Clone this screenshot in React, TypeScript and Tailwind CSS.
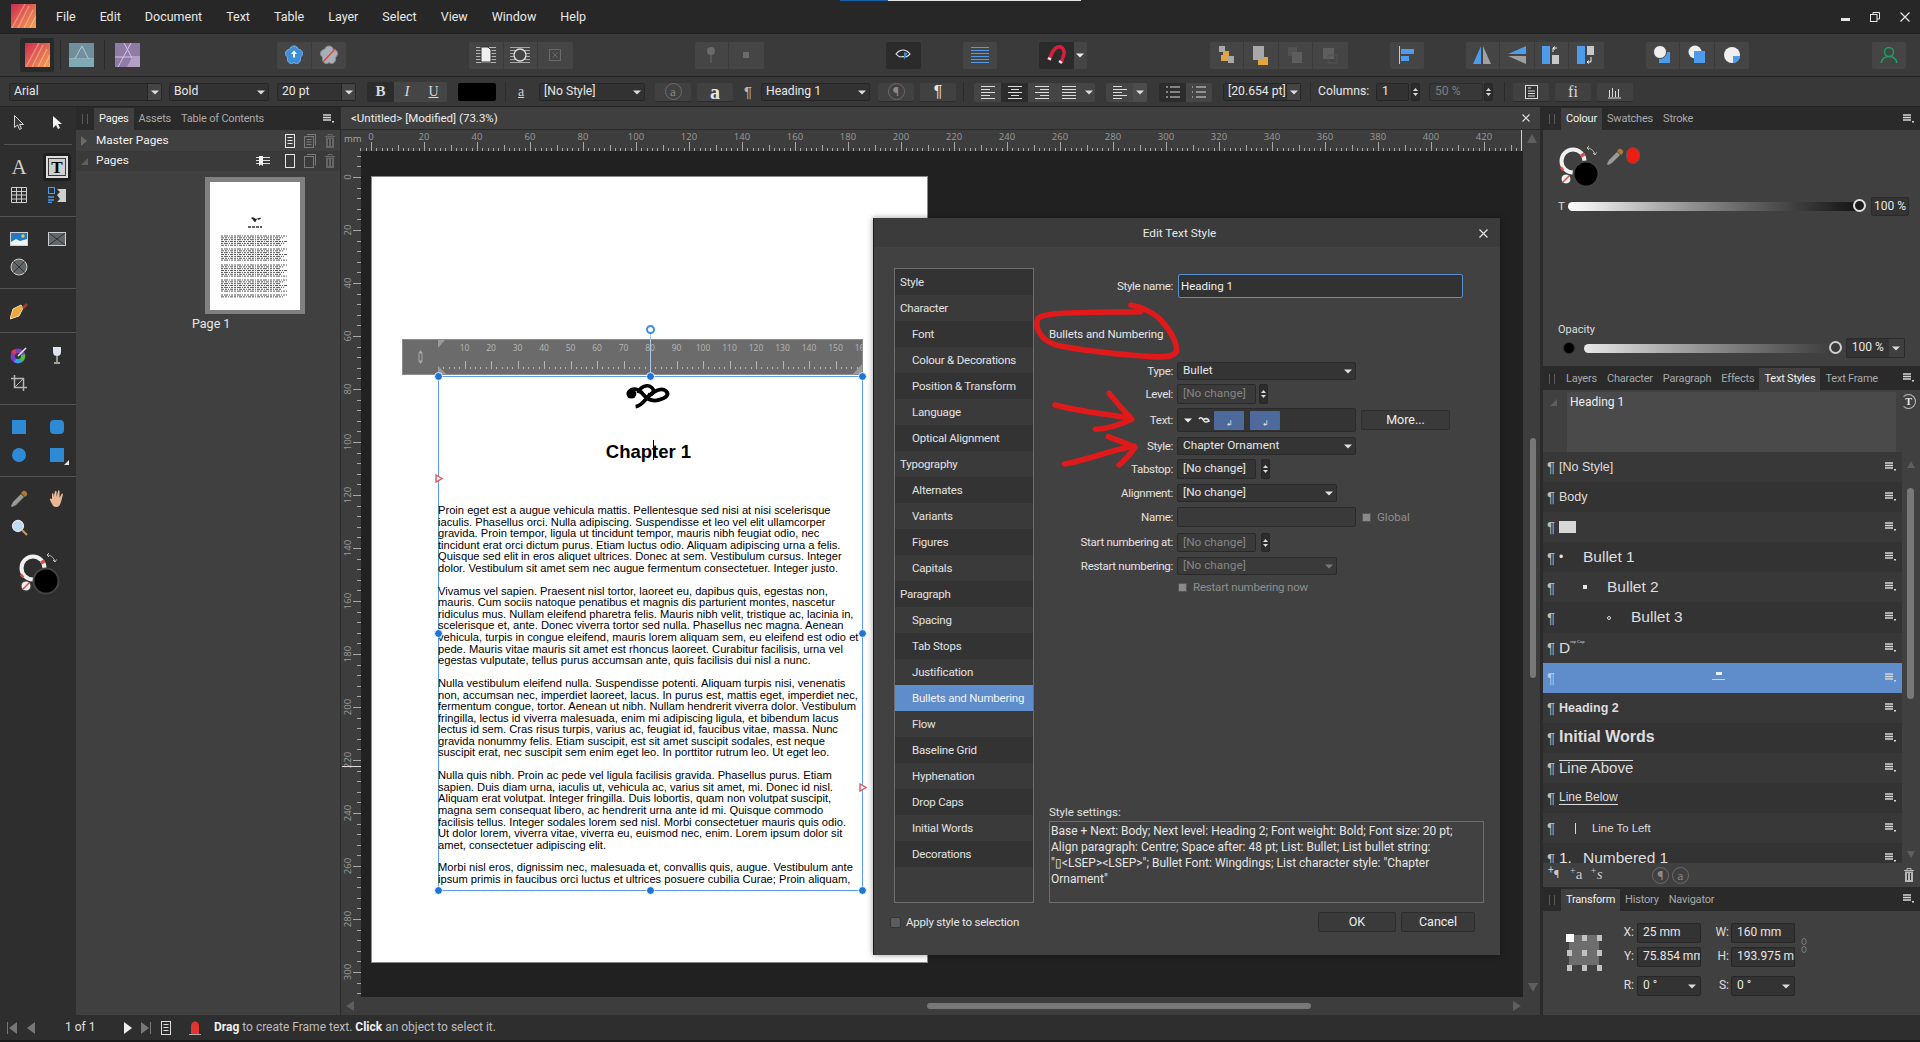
import type { ReactNode } from "react";

const dim = "#6a6a6a";

function Svg({ w = 24, h = 24, vb, children, className }: { w?: number; h?: number; vb?: string; children: ReactNode; className?: string }) {
  return (
    <svg width={w} height={h} viewBox={vb ?? `0 0 ${w} ${h}`} className={className} fill="none">
      {children}
    </svg>
  );
}

function Caret({ color = "#dcdcdc" }: { color?: string }) {
  return (
    <Svg w={8} h={5}>
      <path d="M0 0.500h8L4 4.500z" fill={color} />
    </Svg>
  );
}

function Persona({ from, to, id, line }: { from: string; to: string; id: string; line: string }) {
  return (
    <Svg w={25} h={24}>
      <defs>
        <linearGradient id={id} x1="0" y1="0" x2="1" y2="1">
          <stop offset="0" stopColor={from} />
          <stop offset="1" stopColor={to} />
        </linearGradient>
      </defs>
      <rect width="25" height="24" fill={`url(#${id})`} />
      <path d="M1 24L14 0M7 24L18 2M13 24L22 6M19 24L25 12" stroke={line} strokeWidth="1.400" />
    </Svg>
  );
}

function MenuIcon() {
  return (
    <Svg w={11} h={9}>
      <path d="M0 1h8M0 3.500h8M0 6h8" stroke="#d5d5d5" strokeWidth="1.300" />
      <rect x="9" y="7" width="2" height="1.500" fill="#d5d5d5" />
    </Svg>
  );
}

function Flower({ off }: { off?: boolean }) {
  return (
    <Svg w={20} h={20}>
      <path
        d="M10 1c2.400 0 3.700 1.600 4.200 3.200 2.200.2 4.300 1.700 4.300 4.300 0 1.800-1 3-2 3.800.4 2.200-.3 6.200-3.900 6.200-1.100 0-1.900-.4-2.600-1-.7.6-1.500 1-2.600 1-3.600 0-4.300-4-3.900-6.200-1-.8-2-2-2-3.800 0-2.600 2.100-4.100 4.300-4.300C6.300 2.600 7.600 1 10 1z"
        fill={off ? "#a9afb8" : "#3f8ed6"}
        stroke={off ? "#8b8f96" : "#7bb6ea"}
      />
      {off ? <path d="M4 17L16 4" stroke="#e2462f" strokeWidth="1.300" /> : <path d="M10 5.500l3 3.500h-2v3.500H9V9H7z" fill="#fff" />}
    </Svg>
  );
}

function Btn({ children, className = "" }: { children?: ReactNode; className?: string }) {
  return <div className={`w-[34.500px] h-[27px] flex items-center justify-center bg-[#454545] border-r border-[#3a3a3a] last:border-r-0 ${className}`}>{children}</div>;
}

function Group({ children, className = "" }: { children: ReactNode; className?: string }) {
  return <div className={`flex shrink-0 rounded-[2px] overflow-hidden ${className}`}>{children}</div>;
}

function OrderIcon({ n }: { n: number }) {
  if (n === 0)
    return (
      <Svg w={17} h={20}>
        <rect x="1" y="1" width="6" height="6" fill="#a8a8a8" />
        <rect x="5" y="6" width="6" height="6" fill="#e2a53d" />
        <rect x="10" y="11" width="6" height="7" fill="#a8a8a8" />
        <rect x="3" y="10" width="7" height="6" fill="#e2a53d" />
      </Svg>
    );
  return (
    <Svg w={17} h={20}>
      <rect x="6" y="12" width="10" height="8" fill="#e2a53d" />
      <rect x="1" y="1" width="11" height="14" fill="#a8a8a8" />
    </Svg>
  );
}

function TitleBar() {
  const items = ["File", "Edit", "Document", "Text", "Table", "Layer", "Select", "View", "Window", "Help"];
  return (
    <div className="h-[33px] shrink-0 flex items-center bg-[#272727] relative">
      <div className="ml-[11px] mt-[-2px]">
        <Persona id="pubA" from="#cf2a52" to="#f7a24b" line="#ffffff55" />
      </div>
      <div className="flex ml-[20px] mt-[2px] gap-[24px] text-[#e8e8e8] text-[12.500px]">
        {items.map((t) => (
          <span key={t}>{t}</span>
        ))}
      </div>
      <div className="ml-auto flex items-center gap-[20px] mr-[10px]">
        <div className="w-[9px] h-[3px] bg-[#e6e6e6] mt-[6px]" />
        <Svg w={10} h={10}>
          <rect x="0.500" y="2.500" width="6.500" height="7" stroke="#e6e6e6" />
          <path d="M3 2.500V0.500h6.500V7H7" stroke="#e6e6e6" />
        </Svg>
        <Svg w={10} h={10}>
          <path d="M0.500 0.500l9 9M9.500 0.500l-9 9" stroke="#e6e6e6" strokeWidth="1.200" />
        </Svg>
      </div>
      <div className="absolute left-[840px] top-0 h-px w-[48px] bg-[#1b5fa8]" />
      <div className="absolute left-[888px] top-0 h-px w-[193px] bg-[#e6e6e6]" />
    </div>
  );
}

function MainToolbar() {
  return (
    <div className="h-[44px] shrink-0 flex items-center bg-[#3a3a3a] border-t border-b border-[#222222]">
      <div className="ml-[20px] w-[34px] h-[34px] flex items-center justify-center bg-[#292929] rounded-[2px] shrink-0">
        <Persona id="pubB" from="#cf2a52" to="#f7a24b" line="#ffffff55" />
      </div>
      <div className="ml-[6px] w-px h-[30px] bg-[#2a2a2a] shrink-0" />
      <div className="ml-[8px] shrink-0">
        <Svg w={25} h={24}>
          <rect width="25" height="24" fill="#6f8f9f" />
          <path d="M3 21L13 3l9 18M0 16h25" stroke="#b5ccd6" strokeWidth="1" />
          <path d="M0 16h25v8H0z" fill="#7faab4" />
        </Svg>
      </div>
      <div className="ml-[10px] w-px h-[30px] bg-[#2a2a2a] shrink-0" />
      <div className="ml-[10px] shrink-0">
        <Svg w={25} h={24}>
          <rect width="25" height="24" fill="#8f7ba4" />
          <path d="M0 14h25M16 0L3 24M9 0l13 24" stroke="#d5c6e2" strokeWidth="1" />
          <path d="M12 24l5-10h8v10z" fill="#b3a0c4" />
        </Svg>
      </div>

      <Group className="ml-[137px]">
        <Btn><Flower /></Btn>
        <Btn><Flower off /></Btn>
      </Group>

      <Group className="ml-[123px]">
        <Btn>
          <Svg w={20} h={20}>
            <path d="M0 2.500h20M0 5.500h20M0 8.500h20M0 11.500h20M0 14.500h20M0 17.500h20" stroke="#b5b5b5" />
            <path d="M5 2h7l3 3v12H5z" fill="#eeeeee" stroke="#333" />
          </Svg>
        </Btn>
        <Btn>
          <Svg w={20} h={20}>
            <path d="M0 2.500h20M0 5.500h20M0 8.500h20M0 11.500h20M0 14.500h20M0 17.500h20" stroke="#a5a5a5" />
            <circle cx="10" cy="10" r="6" fill="#454545" stroke="#e0e0e0" strokeWidth="1.300" />
          </Svg>
        </Btn>
        <Btn>
          <Svg w={12} h={12}>
            <rect x="0.500" y="0.500" width="11" height="11" stroke={dim} />
            <path d="M3.500 3.500l5 5M8.500 3.500l-5 5" stroke={dim} />
          </Svg>
        </Btn>
      </Group>

      <Group className="ml-[122px]">
        <Btn>
          <Svg w={10} h={18}>
            <circle cx="5" cy="5" r="4" fill={dim} />
            <path d="M5 8v9" stroke={dim} />
          </Svg>
        </Btn>
        <Btn><div className="w-[6px] h-[6px] bg-[#6a6a6a]" /></Btn>
      </Group>

      <div className="ml-[122px] w-[35px] h-[27px] flex items-center justify-center bg-[#2b2b2b] rounded-[2px] shrink-0">
        <Svg w={16} h={12}>
          <path d="M1 5c2-2.500 4.500-4 7-4s5 1.500 7 4c-1 1-2.500 2.200-4 3l-3-.500-3 .500C3.500 7.500 2.200 6.300 1 5z" stroke="#e8e8e8" strokeWidth="1.100" />
          <path d="M9 3l3.500 1.500-2.500 4-1 3z" fill="#3f8ed6" />
        </Svg>
      </div>

      <div className="ml-[42px] w-[34px] h-[27px] flex items-center justify-center bg-[#454545] rounded-[2px] shrink-0">
        <Svg w={18} h={16}>
          <path d="M0 0.500h18M0 3.500h18M0 6.500h18M0 9.500h18M0 12.500h18M0 15.500h18" stroke="#4d9bea" strokeWidth="1.200" />
        </Svg>
      </div>

      <div className="ml-[42px] flex shrink-0 rounded-[2px] overflow-hidden">
        <div className="w-[35px] h-[27px] flex items-center justify-center bg-[#2b2b2b]">
          <Svg w={19} h={20}>
            <path d="M14 18l3-9C18 4 14 1 11 2 7 3 6 6 5 8l-3 7" stroke="#d51f3c" strokeWidth="3.600" />
            <path d="M1 13l3 1.500M12 16l3 2" stroke="#e8e8e8" strokeWidth="2.400" />
          </Svg>
        </div>
        <div className="w-[13px] h-[27px] flex items-center justify-center bg-[#454545]"><Caret color="#efefef" /></div>
      </div>

      <Group className="ml-[123px]">
        <Btn><OrderIcon n={0} /></Btn>
        <Btn><OrderIcon n={1} /></Btn>
        <Btn>
          <Svg w={16} h={18}>
            <rect x="1" y="1" width="9" height="9" fill="#525252" />
            <rect x="5" y="6" width="10" height="11" fill="#5e5e5e" />
          </Svg>
        </Btn>
        <Btn>
          <Svg w={16} h={18}>
            <rect x="1" y="2" width="11" height="11" fill="#5e5e5e" />
            <rect x="6" y="9" width="9" height="8" stroke="#525252" />
          </Svg>
        </Btn>
      </Group>

      <Btnless className="ml-[42px]">
        <Svg w={15} h={18}>
          <path d="M0.500 0v18" stroke="#c8c8c8" />
          <rect x="2" y="3" width="13" height="5" fill="#4d9bea" />
          <rect x="2" y="10" width="8" height="5" fill="#4d9bea" />
        </Svg>
      </Btnless>

      <Group className="ml-[42px]">
        <Btn>
          <Svg w={20} h={20}>
            <path d="M9 1v18H1z" fill="#4d9bea" />
            <path d="M11 1v18h8z" fill="#a0a0a0" />
          </Svg>
        </Btn>
        <Btn>
          <Svg w={20} h={20}>
            <path d="M19 1v8H1z" fill="#4d9bea" />
            <path d="M19 19v-8H1z" fill="#a0a0a0" />
          </Svg>
        </Btn>
        <Btn>
          <Svg w={18} h={20}>
            <rect x="0" y="1" width="8" height="18" fill="#4d9bea" />
            <rect x="10" y="10" width="7" height="9" fill="#c8c8c8" />
            <path d="M11 7V3h4M11 3l2-1.500M11 3l2 1.500" stroke="#efefef" />
          </Svg>
        </Btn>
        <Btn>
          <Svg w={18} h={20}>
            <rect x="0" y="1" width="8" height="18" fill="#4d9bea" />
            <rect x="10" y="1" width="7" height="9" fill="#c8c8c8" />
            <path d="M14 12v5h-4M10 17l2-1.500M10 17l2 1.500" stroke="#efefef" />
          </Svg>
        </Btn>
      </Group>

      <Group className="ml-[42px]">
        <Btn>
          <Svg w={18} h={20}>
            <rect x="6" y="7" width="11" height="11" fill="#4d9bea" />
            <circle cx="7" cy="7" r="6.500" fill="#efefef" stroke="#454545" />
          </Svg>
        </Btn>
        <Btn>
          <Svg w={18} h={20}>
            <circle cx="7" cy="7" r="6.500" fill="#efefef" />
            <rect x="6" y="6" width="11" height="12" fill="#4d9bea" />
          </Svg>
        </Btn>
        <Btn>
          <Svg w={18} h={20}>
            <circle cx="9" cy="10" r="8" fill="#efefef" />
            <path d="M10 11h7c0 4-3 7-7 7z" fill="#4d9bea" />
          </Svg>
        </Btn>
      </Group>

      <Btnless className="ml-[123px]">
        <Svg w={18} h={18}>
          <circle cx="9" cy="6" r="4.500" stroke="#17a365" strokeWidth="1.500" />
          <path d="M1 17c1-4 4-6.500 8-6.500s7 2.500 8 6.500" stroke="#17a365" strokeWidth="1.500" />
        </Svg>
      </Btnless>
    </div>
  );
}

function Btnless({ children, className = "" }: { children: ReactNode; className?: string }) {
  return <div className={`w-[34px] h-[27px] flex items-center justify-center bg-[#454545] rounded-[2px] shrink-0 ${className}`}>{children}</div>;
}

function Combo({ label, className = "", split, muted }: { label: string; className?: string; split?: boolean; muted?: boolean }) {
  return (
    <div className={`h-[18px] shrink-0 flex items-center bg-[#323232] border border-[#262626] rounded-[2px] pl-[4px] ${muted ? "text-[#8a8a8a]" : "text-[#e6e6e6]"} ${className}`}>
      <span className="flex-1 whitespace-nowrap overflow-hidden">{label}</span>
      {split ? (
        <span className="w-[14px] h-full flex items-center justify-center bg-[#444444] border-l border-[#262626]">
          <Caret />
        </span>
      ) : (
        <span className="w-[14px] flex items-center justify-center">
          <Caret color={muted ? "#777777" : "#dcdcdc"} />
        </span>
      )}
    </div>
  );
}

function Spin({ className = "" }: { className?: string }) {
  return (
    <div className={`w-[9px] h-[18px] shrink-0 flex flex-col items-center justify-center gap-[2px] bg-[#2c2c2c] rounded-[2px] border border-[#262626] ${className}`}>
      <svg width="5" height="3"><path d="M0 3h5L2.500 0z" fill="#dcdcdc" /></svg>
      <svg width="5" height="3"><path d="M0 0h5L2.500 3z" fill="#dcdcdc" /></svg>
    </div>
  );
}

function CtxBtn({ children, className = "" }: { children?: ReactNode; className?: string }) {
  return <div className={`w-[36px] h-[19px] shrink-0 flex items-center justify-center bg-[#414141] border-b border-[#2c2c2c] rounded-[2px] ${className}`}>{children}</div>;
}

function Lines({ d, color = "#dcdcdc" }: { d: string; color?: string }) {
  return (
    <Svg w={14} h={14}>
      <path d={d} stroke={color} />
    </Svg>
  );
}

function Serif({ children, className = "" }: { children: ReactNode; className?: string }) {
  return <span className={`font-['Liberation_Serif',serif] ${className}`}>{children}</span>;
}

function CtxSep({ className = "" }: { className?: string }) {
  return <div className={`w-px h-[20px] bg-[#2a2a2a] shrink-0 ${className}`} />;
}

function Circled({ children }: { children: ReactNode }) {
  return (
    <span className="w-[17px] h-[17px] rounded-full border border-[#6c6c6c] flex items-center justify-center text-[#8a8a8a] text-[13px] leading-none">
      {children}
    </span>
  );
}

function ContextBar() {
  return (
    <div className="h-[30px] shrink-0 flex items-center bg-[#383838] border-b border-[#222222] text-[12.200px] pt-[1px]">
      <Combo label="Arial" split className="ml-[9px] w-[153px]" />
      <Combo label="Bold" className="ml-[7px] w-[100px]" />
      <Combo label="20 pt" split className="ml-[8px] w-[79px]" />
      <div className="ml-[11px] flex shrink-0 rounded-[2px] overflow-hidden h-[20px]">
        <div className="w-[27px] flex items-center justify-center bg-[#2c2c2c]"><Serif className="font-bold text-[15px] text-[#d8d8d8]">B</Serif></div>
        <div className="w-[26px] flex items-center justify-center bg-[#454545]"><Serif className="italic text-[15px] text-[#d8d8d8]">I</Serif></div>
        <div className="w-[27px] flex items-center justify-center bg-[#454545]"><Serif className="underline text-[14px] text-[#d8d8d8]">U</Serif></div>
      </div>
      <div className="ml-[11px] w-[38px] h-[18px] bg-black rounded-[2px] shrink-0" />
      <CtxSep className="ml-[9px]" />
      <Serif className="ml-[12px] w-[14px] text-[14px] text-[#d0d0d0] underline">a</Serif>
      <Combo label="[No Style]" className="ml-[7px] w-[106px]" />
      <CtxBtn className="ml-[10px] bg-[#3d3d3d]"><Circled><Serif>a</Serif></Circled></CtxBtn>
      <CtxBtn className="ml-[6px]"><Serif className="text-[20px] leading-none text-[#e6e6e6] font-bold">a</Serif></CtxBtn>
      <span className="ml-[11px] w-[12px] text-[15px] text-[#b8b8b8] font-['Liberation_Sans',sans-serif]">¶</span>
      <Combo label="Heading 1" className="ml-[5px] w-[109px]" />
      <CtxBtn className="ml-[8px] bg-[#3d3d3d]"><Circled>¶</Circled></CtxBtn>
      <CtxBtn className="ml-[6px]"><span className="text-[16px] leading-none text-[#e6e6e6] font-['Liberation_Sans',sans-serif]">¶</span></CtxBtn>
      <CtxSep className="ml-[7px]" />
      <div className="ml-[10px] flex shrink-0 rounded-[2px] overflow-hidden h-[19px]">
        <div className="w-[27px] flex items-center justify-center bg-[#454545]"><Lines d="M0 1.500h14M0 4.500h9M0 7.500h14M0 10.500h9M0 13.500h14" /></div>
        <div className="w-[27px] flex items-center justify-center bg-[#2c2c2c]"><Lines d="M0 1.500h14M3 4.500h8M0 7.500h14M3 10.500h8M0 13.500h14" /></div>
        <div className="w-[27px] flex items-center justify-center bg-[#454545]"><Lines d="M0 1.500h14M5 4.500h9M0 7.500h14M5 10.500h9M0 13.500h14" /></div>
        <div className="w-[27px] flex items-center justify-center bg-[#454545]"><Lines d="M0 1.500h14M0 4.500h14M0 7.500h14M0 10.500h14M0 13.500h14" /></div>
        <div className="w-[13px] flex items-center justify-center bg-[#454545]"><Caret /></div>
      </div>
      <div className="ml-[11px] flex shrink-0 rounded-[2px] overflow-hidden h-[19px]">
        <div className="w-[27px] flex items-center justify-center bg-[#454545]"><Lines d="M0 1.500h9M0 4.500h14M0 7.500h9M0 10.500h14M0 13.500h9" /></div>
        <div className="w-[14px] flex items-center justify-center bg-[#4c4c4c]"><Caret /></div>
      </div>
      <div className="ml-[12px] flex shrink-0 rounded-[2px] overflow-hidden h-[19px]">
        <div className="w-[27px] flex items-center justify-center bg-[#2c2c2c]"><Lines d="M0 2h2M4 2h10M0 7h2M4 7h10M0 12h2M4 12h10" /></div>
        <div className="w-[26px] flex items-center justify-center bg-[#454545]"><Lines d="M0 1v2M0 6v2M0 11v2M4 2h10M4 7h10M4 12h10" /></div>
      </div>
      <Combo label="[20.654 pt]" split className="ml-[11px] w-[78px]" />
      <CtxSep className="ml-[9px]" />
      <span className="ml-[7px] w-[52px] shrink-0 text-[#e6e6e6] whitespace-nowrap">Columns:</span>
      <div className="ml-[6px] w-[33px] h-[18px] bg-[#323232] border border-[#262626] rounded-[2px] pl-[5px] flex items-center shrink-0">1</div>
      <Spin className="ml-[2px]" />
      <div className="ml-[9px] w-[54px] h-[18px] bg-[#383838] border border-[#2c2c2c] rounded-[2px] pl-[5px] flex items-center text-[#7c7c7c] shrink-0">50 %</div>
      <Spin className="ml-[1px]" />
      <CtxSep className="ml-[11px]" />
      <CtxBtn className="ml-[8px]">
        <Svg w={13} h={14}>
          <rect x="0.500" y="0.500" width="12" height="13" stroke="#dcdcdc" fill="#333" />
          <path d="M3 3h3M3 6h7M3 8.500h7M3 11h7" stroke="#dcdcdc" />
        </Svg>
      </CtxBtn>
      <CtxBtn className="ml-[6px]"><Serif className="text-[16px] leading-none text-[#d8d8d8]">fi</Serif></CtxBtn>
      <CtxBtn className="ml-[6px] bg-[#2c2c2c]">
        <Lines d="M1.500 5v7M4.500 3v9M7.500 6v6M10.500 4v8M0 13h13" />
      </CtxBtn>
    </div>
  );
}

function ToolSection({ children }: { children: ReactNode }) {
  return <div className="grid grid-cols-2 auto-rows-[28px] border-b border-[#555555] pt-[8px] pb-[7px]">{children}</div>;
}

function Tool({ children, active }: { children?: ReactNode; active?: boolean }) {
  return <div className={`flex items-center justify-center ${active ? "bg-[#1f1f1f] rounded-[4px] mx-[5px]" : ""}`}>{children}</div>;
}

function Ring({ size = 42 }: { size?: number }) {
  return (
    <Svg w={size} h={size} vb="0 0 42 42">
      <circle cx="15" cy="15" r="11.500" stroke="#f0f0f0" strokeWidth="4" />
      <path d="M24 7.500l1.500 3M5 22l-2 1.500" stroke="#e24a44" strokeWidth="4" />
      <circle cx="28" cy="28" r="12.500" fill="#000" stroke="#444" strokeWidth="2" />
      <circle cx="8" cy="33" r="5" fill="#f0f0f0" stroke="#3a3a3a" />
      <path d="M4.500 36.500l7-7" stroke="#e24a44" strokeWidth="1.500" />
      <path d="M29 2c3 0 7 2 8 7M29 2l2-2M29 2l2 2M37 9l-2-2M37 9l1.500-2.500" stroke="#bdbdbd" />
    </Svg>
  );
}

function Dropper({ size = 18 }: { size?: number }) {
  return (
    <Svg w={size} h={size} vb="0 0 18 18">
      <path d="M11 4l3 3-8 8-4 2-1-1 2-4z" fill="#9a9a9a" />
      <path d="M11 3l4 4 2-2c1-2-2-5-4-4z" fill="#b07a2e" />
    </Svg>
  );
}

function BlueSquare({ cls }: { cls: string }) {
  return <div className={`w-[14px] h-[14px] bg-[#2f8ad6] ${cls}`} />;
}

function ToolsColumn() {
  return (
    <div className="w-[76px] shrink-0 bg-[#2e2e2e] flex flex-col px-[4px] pt-[1px]">
      <div className="grid grid-cols-2 auto-rows-[28px] -mx-[4px]">
        <Tool>
          <Svg w={11} h={15}>
            <path d="M0.500 0.500v12l3-2.500 2 4.500 2-1-2-4h4z" stroke="#d5d5d5" fill="#3a3a3a" />
          </Svg>
        </Tool>
        <Tool>
          <Svg w={9} h={13}>
            <path d="M0 0v12l3-3 2 4 2-1-2-4h4z" fill="#f5f5f5" />
          </Svg>
        </Tool>
      </div>
      <div className="border-b border-[#555555] h-[9px]" />
      <div className="-mx-[4px]">
        <ToolSection>
          <Tool><Serif className="text-[21px] leading-none text-[#cfcfcf]">A</Serif></Tool>
          <Tool active>
            <div className="w-[22px] h-[22px] bg-[#3a3a3a] border-[2px] border-[#dcdcdc] flex items-center justify-center">
              <div className="w-[16px] h-[16px] bg-[#cfcfcf] flex items-center justify-center">
                <Serif className="text-[17px] leading-none text-black font-bold">T</Serif>
              </div>
            </div>
          </Tool>
          <Tool>
            <Svg w={16} h={16}>
              <path d="M0.500 0.500h15v15H0.500zM0.500 4.500h15M0.500 8h15M0.500 12h15M5.500 0.500v15M10.500 0.500v15" stroke="#cfcfcf" />
            </Svg>
          </Tool>
          <Tool>
            <Svg w={19} h={16}>
              <rect x="0.500" y="0.500" width="6" height="6" stroke="#4d9bea" />
              <path d="M0 10h6M0 13h6M0 15.500h4" stroke="#4d9bea" strokeWidth="1.300" />
              <path d="M9 2h9v13H9l3-3-3-4 3-3z" fill="#cfcfcf" />
            </Svg>
          </Tool>
        </ToolSection>
        <ToolSection>
          <Tool>
            <Svg w={18} h={14}>
              <rect x="0.500" y="0.500" width="17" height="13" fill="#1f78c8" stroke="#d0d0d0" />
              <path d="M1 10l5-3 4 2 7-2v6H1z" fill="#f3f3f3" />
              <circle cx="13" cy="4" r="1.700" fill="#f1c453" />
            </Svg>
          </Tool>
          <Tool>
            <Svg w={18} h={14}>
              <rect x="0.500" y="0.500" width="17" height="13" fill="#666" stroke="#cfcfcf" />
              <path d="M1 1l16 12M17 1L1 13" stroke="#24304a" />
            </Svg>
          </Tool>
          <Tool>
            <Svg w={18} h={18}>
              <circle cx="9" cy="9" r="8" fill="#666" stroke="#cfcfcf" />
              <path d="M3.500 3.500l11 11M14.500 3.500l-11 11" stroke="#24304a" />
            </Svg>
          </Tool>
          <Tool />
        </ToolSection>
        <ToolSection>
          <Tool>
            <Svg w={18} h={18}>
              <path d="M11 3L3 7 0 17l9-3 4-8z" fill="#e9a93e" stroke="#f7dba6" />
              <path d="M12 5l4-4 2 2-4 4z" fill="#a33a2e" />
            </Svg>
          </Tool>
          <Tool />
        </ToolSection>
        <ToolSection>
          <Tool>
            <Svg w={18} h={18}>
              <circle cx="8" cy="10" r="7.500" fill="#7a3fc2" />
              <path d="M8 10L1 6a8 8 0 0 1 4-3z" fill="#e33a4e" />
              <path d="M8 10l7-2a8 8 0 0 1-3 8z" fill="#55c13e" />
              <path d="M8 10l4 6a8 8 0 0 1-8 0z" fill="#2ba7e0" />
              <circle cx="8" cy="10" r="3" fill="#333" />
              <path d="M8 10l8-8" stroke="#f0f0f0" strokeWidth="1.400" />
            </Svg>
          </Tool>
          <Tool>
            <Svg w={10} h={17}>
              <path d="M1 0h8v5c0 3-2 4-4 4S1 8 1 5z" fill="#dfe5ef" />
              <path d="M5 9v6M2 16h6" stroke="#c9c9c9" strokeWidth="1.300" />
            </Svg>
          </Tool>
          <Tool>
            <Svg w={16} h={16}>
              <path d="M3.500 0v12.500H16M0 3.500h12.500V16" stroke="#b5b5b5" strokeWidth="1.500" />
              <path d="M3 13L13 3" stroke="#b5b5b5" />
            </Svg>
          </Tool>
          <Tool />
        </ToolSection>
        <ToolSection>
          <Tool><BlueSquare cls="" /></Tool>
          <Tool><BlueSquare cls="rounded-[4px]" /></Tool>
          <Tool><BlueSquare cls="rounded-full" /></Tool>
          <Tool>
            <div className="relative">
              <BlueSquare cls="" />
              <div className="absolute left-[14px] top-[12px] w-0 h-0 border-l-[5px] border-l-transparent border-b-[5px] border-b-[#e6e6e6]" />
            </div>
          </Tool>
        </ToolSection>
        <div className="grid grid-cols-2 auto-rows-[28px] py-[8px]">
          <Tool><Dropper /></Tool>
          <Tool>
            <Svg w={17} h={18}>
              <path d="M3 9V4c0-1 1.500-1 1.500 0v3L6 1.500c0-1 1.500-1 1.500 0V7L9 1c.3-1 1.800-.8 1.500.3V8l2-4c.5-1 1.800-.5 1.400.6L12 12c-1 3-2 5-5 5-2 0-3-1-4-3L1 10c-.5-1 .8-2 1.500-1z" fill="#e8b894" />
            </Svg>
          </Tool>
          <Tool>
            <Svg w={17} h={17}>
              <circle cx="7" cy="7" r="5.500" fill="#bcdcf5" stroke="#dfe6ee" strokeWidth="1.300" />
              <path d="M11 11l5 5" stroke="#d59b4d" strokeWidth="2" />
            </Svg>
          </Tool>
          <Tool />
        </div>
        <div className="ml-[18px] mt-[4px]">
          <Ring size={42} />
        </div>
      </div>
    </div>
  );
}

function Tabs({ items, active, h = "h-[23px]" }: { items: string[]; active: string; h?: string }) {
  return (
    <div className={`${h} shrink-0 flex items-end bg-[#2a2a2a] relative text-[11px] tracking-[-0.2px]`}>
      <div className="w-[6px] h-[10px] ml-[6px] mr-[6px] mb-[6px] border-x border-[#5a5a5a]" />
      {items.map((t) => (
        <div key={t} className={`h-[22px] px-[5px] flex items-center whitespace-nowrap ${t === active ? "bg-[#404040] text-[#f0f0f0]" : "text-[#a9a9a9]"}`}>
          {t}
        </div>
      ))}
      <div className="absolute right-[6px] top-[7px]"><MenuIcon /></div>
    </div>
  );
}

function Thumb() {
  const paras: [number, number][] = [[54, 6], [67, 7], [83, 7], [98, 7], [113, 2]];
  return (
    <Svg w={90} h={128}>
      <rect width="90" height="128" fill="#fff" />
      <path d="M41 36c2-2 4 1 5 1s3-2 5-1c-1 2-3 2-4 1-1 1-1 3-2 3s-2-3-4-4z" fill="#222" />
      <path d="M38 45h14" stroke="#333" strokeWidth="1.400" strokeDasharray="3 1" />
      {paras.map(([y, n]) =>
        Array.from({ length: n }).map((_, i) => (
          <path key={`${y}-${i}`} d={`M11 ${y + i * 1.850}h${66 - (i % 3) * 3}`} stroke="#555" strokeWidth="1" strokeDasharray={i % 2 ? "3 1 2 1 1 1" : "2 1 4 1 1 1 2 1"} />
        )),
      )}
    </Svg>
  );
}

function DocLines({ color = "#cfcfcf", copy }: { color?: string; copy?: boolean }) {
  return (
    <Svg w={12} h={14}>
      {copy ? (
        <>
          <path d="M3 0.500h8.500v11" stroke={color} />
          <rect x="0.500" y="2.500" width="9" height="11" stroke={color} />
          <path d="M2.500 5.500h5M2.500 8h5M2.500 10.500h5" stroke={color} />
        </>
      ) : (
        <>
          <rect x="1.500" y="0.500" width="9" height="13" stroke={color} />
          <path d="M3.500 3.500h5M3.500 6.500h5M3.500 9.500h5" stroke={color} />
        </>
      )}
    </Svg>
  );
}

function Trash({ color = "#666666" }: { color?: string }) {
  return (
    <Svg w={10} h={14}>
      <path d="M0 2.500h10M3 2V0.500h4V2" stroke={color} />
      <path d="M1 3.500h8V14H1z" fill={color} />
      <path d="M3.500 5v7M6.500 5v7" stroke="#3a3a3a" />
    </Svg>
  );
}

function PagesPanel() {
  return (
    <div className="w-[265px] shrink-0 flex flex-col bg-[#404040] border-r border-[#2a2a2a]">
      <Tabs items={["Pages", "Assets", "Table of Contents"]} active="Pages" />
      <div className="h-[21px] flex items-center">
        <div className="ml-[5px] w-[15px]"><div className="w-0 h-0 border-y-[5px] border-y-transparent border-l-[6px] border-l-[#6a6a6a]" /></div>
        <span className="w-[188px] text-[#f0f0f0] text-[11.800px] whitespace-nowrap">Master Pages</span>
        <DocLines color="#e6e6e6" />
        <div className="ml-[8px]"><DocLines color="#7a7a7a" copy /></div>
        <div className="ml-[9px]"><Trash /></div>
      </div>
      <div className="h-[20px] flex items-center bg-[#3a3a3a]">
        <div className="ml-[5px] w-[15px]"><div className="w-0 h-0 border-t-[7px] border-t-transparent border-r-[7px] border-r-[#5e5e5e]" /></div>
        <span className="w-[160px] text-[#f0f0f0] text-[11.800px]">Pages</span>
        <Svg w={14} h={10}>
          <path d="M0 1.500h14M0 4.500h14M0 7.500h14" stroke="#dcdcdc" />
          <path d="M3 0h4v10l-2-1.500L3 10z" fill="#f0f0f0" />
        </Svg>
        <div className="ml-[14px]">
          <Svg w={12} h={14}><rect x="1.500" y="0.500" width="9" height="13" stroke="#e6e6e6" /></Svg>
        </div>
        <div className="ml-[8px]">
          <Svg w={12} h={14}>
            <path d="M3 0.500h8.500v11" stroke="#7a7a7a" />
            <rect x="0.500" y="2.500" width="9" height="11" stroke="#7a7a7a" />
          </Svg>
        </div>
        <div className="ml-[9px]"><Trash /></div>
      </div>
      <div className="ml-[129px] mt-[6px] w-[100px] h-[137px] bg-[#808080] flex items-center justify-center">
        <Thumb />
      </div>
      <div className="ml-[116px] mt-[2px] text-[12.500px] text-[#e8e8e8]">Page 1</div>
    </div>
  );
}

function HRuler() {
  const ticks: number[] = [];
  for (let mm = -4; mm <= 432; mm += 2) ticks.push(mm);
  const labels: number[] = [];
  for (let mm = 0; mm <= 420; mm += 20) labels.push(mm);
  return (
    <svg width="1182" height="21" className="block">
      {ticks.map((mm) => {
        const x = Math.round(30 + mm * 2.65) + 0.5;
        const len = mm % 20 === 0 ? 9 : mm % 10 === 0 ? 6 : 3;
        return <path key={mm} d={`M${x} ${21 - len}V21`} stroke="#a8a8a8" />;
      })}
      {labels.map((mm) => (
        <text key={mm} x={30 + mm * 2.65} y="10" fontSize="9.500" textAnchor="middle" fill="#9a9a9a" fontFamily="'Open Sans',sans-serif">{mm}</text>
      ))}
      <text x="3" y="12" fontSize="9.500" fill="#a8a8a8" fontFamily="'Open Sans',sans-serif">mm</text>
      <path d="M1180.500 0V21" stroke="#cfcfcf" />
    </svg>
  );
}

function VRuler() {
  const ticks: number[] = [];
  for (let mm = -8; mm <= 308; mm += 4) ticks.push(mm);
  const labels: number[] = [];
  for (let mm = 0; mm <= 300; mm += 20) labels.push(mm);
  return (
    <svg width="20" height="846" className="block shrink-0">
      {ticks.map((mm) => {
        const y = Math.round(26 + mm * 2.65) + 0.5;
        const len = mm % 20 === 0 ? 8 : 4;
        return <path key={mm} d={`M${20 - len} ${y}H20`} stroke="#a8a8a8" />;
      })}
      {labels.map((mm) => (
        <text key={mm} transform={`translate(10 ${26 + mm * 2.65}) rotate(-90)`} fontSize="9.500" textAnchor="middle" fill="#9a9a9a" fontFamily="'Open Sans',sans-serif">{mm}</text>
      ))}
      <path d="M1 615.500H20" stroke="#dcdcdc" />
    </svg>
  );
}

const body: string[][] = [
  [
    "Proin eget est a augue vehicula mattis. Pellentesque sed nisi at nisi scelerisque",
    "iaculis. Phasellus orci. Nulla adipiscing. Suspendisse et leo vel elit ullamcorper",
    "gravida. Proin tempor, ligula ut tincidunt tempor, mauris nibh feugiat odio, nec",
    "tincidunt erat orci dictum purus. Etiam luctus odio. Aliquam adipiscing urna a felis.",
    "Quisque sed elit in eros aliquet ultrices. Donec at sem. Vestibulum cursus. Integer",
    "dolor. Vestibulum sit amet sem nec augue fermentum consectetuer. Integer justo.",
  ],
  [
    "Vivamus vel sapien. Praesent nisl tortor, laoreet eu, dapibus quis, egestas non,",
    "mauris. Cum sociis natoque penatibus et magnis dis parturient montes, nascetur",
    "ridiculus mus. Nullam eleifend pharetra felis. Mauris nibh velit, tristique ac, lacinia in,",
    "scelerisque et, ante. Donec viverra tortor sed nulla. Phasellus nec magna. Aenean",
    "vehicula, turpis in congue eleifend, mauris lorem aliquam sem, eu eleifend est odio et",
    "pede. Mauris vitae mauris sit amet est rhoncus laoreet. Curabitur facilisis, urna vel",
    "egestas vulputate, tellus purus accumsan ante, quis facilisis dui nisl a nunc.",
  ],
  [
    "Nulla vestibulum eleifend nulla. Suspendisse potenti. Aliquam turpis nisi, venenatis",
    "non, accumsan nec, imperdiet laoreet, lacus. In purus est, mattis eget, imperdiet nec,",
    "fermentum congue, tortor. Aenean ut nibh. Nullam hendrerit viverra dolor. Vestibulum",
    "fringilla, lectus id viverra malesuada, enim mi adipiscing ligula, et bibendum lacus",
    "lectus id sem. Cras risus turpis, varius ac, feugiat id, faucibus vitae, massa. Nunc",
    "gravida nonummy felis. Etiam suscipit, est sit amet suscipit sodales, est neque",
    "suscipit erat, nec suscipit sem enim eget leo. In porttitor rutrum leo. Ut eget leo.",
  ],
  [
    "Nulla quis nibh. Proin ac pede vel ligula facilisis gravida. Phasellus purus. Etiam",
    "sapien. Duis diam urna, iaculis ut, vehicula ac, varius sit amet, mi. Donec id nisl.",
    "Aliquam erat volutpat. Integer fringilla. Duis lobortis, quam non volutpat suscipit,",
    "magna sem consequat libero, ac hendrerit urna ante id mi. Quisque commodo",
    "facilisis tellus. Integer sodales lorem sed nisl. Morbi consectetuer mauris quis odio.",
    "Ut dolor lorem, viverra vitae, viverra eu, euismod nec, enim. Lorem ipsum dolor sit",
    "amet, consectetuer adipiscing elit.",
  ],
  [
    "Morbi nisl eros, dignissim nec, malesuada et, convallis quis, augue. Vestibulum ante",
    "ipsum primis in faucibus orci luctus et ultrices posuere cubilia Curae; Proin aliquam,",
  ],
];

function Handle({ cls }: { cls: string }) {
  return <div className={`absolute w-[7px] h-[7px] rounded-full bg-[#1f74d4] outline outline-[#d6e6f7] ${cls}`} />;
}

function FrameRuler() {
  const ticks: number[] = [];
  for (let mm = 2; mm <= 160; mm += 2) ticks.push(mm);
  const labels: number[] = [];
  for (let mm = 10; mm <= 160; mm += 10) labels.push(mm);
  return (
    <div className="absolute left-[30px] top-[162px] w-[461px] h-[36px] bg-[#6b6b6b] border border-[#8c8c8c]">
      <svg width="459" height="34" className="block">
        <path d="M35 0h7l-7 8zM35 34V26l8 8z" fill="#9a9a9a" />
        <path d="M459 24v10h-9z" fill="#9a9a9a" />
        {ticks.map((mm) => {
          const x = Math.round(35 + mm * 2.65) + 0.5;
          return <path key={mm} d={`M${x} ${mm % 10 === 0 ? 21 : 27}V29`} stroke="#b5b5b5" />;
        })}
        {labels.map((mm) => (
          <text key={mm} x={35 + mm * 2.65} y="11" fontSize="8.500" textAnchor="middle" fill="#b8b8b8" fontFamily="'Open Sans',sans-serif">{mm}</text>
        ))}
        <path d="M17.500 10l-2 3h4zM17.500 24l-2-3h4z" fill="#a8a8a8" />
        <rect x="16" y="13" width="3" height="8" stroke="#a8a8a8" fill="none" />
      </svg>
    </div>
  );
}

function Page() {
  return (
    <div className="absolute left-[10px] top-[25px] w-[557px] h-[787px] bg-white border border-[#8a8a8a] text-black font-['Liberation_Sans',sans-serif]">
      <FrameRuler />
      <div className="absolute left-[66px] top-[199px] w-[425px] h-[515px] border border-[#5b9bea] text-black">
        <svg width="46" height="27" viewBox="830 850 130 80" preserveAspectRatio="none" className="block ml-[186px] mt-[6px]">
          <circle cx="848" cy="882" r="14" fill="#000" />
          <path d="M842 876C852 862 870 868 880 882C892 898 906 906 926 900C946 895 956 884 946 874C930 860 906 880 896 890C882 905 876 918 860 920" stroke="#000" strokeWidth="11" fill="none" />
          <path d="M868 880C872 860 894 852 906 864C916 875 906 888 894 884" stroke="#000" strokeWidth="10" fill="none" />
        </svg>
        <div className="mt-[30px] h-[24px] leading-[24px] text-center text-[18.500px] font-bold relative pr-[4px]">
          Chapter 1
          <div className="absolute left-[214px] top-[0px] w-px h-[20px] bg-black" />
        </div>
        <div className="mt-[41px] ml-[-1px] text-[11.170px] leading-[11.600px] whitespace-nowrap">
          {body.map((p, i) => (
            <p key={i} className="mb-[11.100px]">
              {p.map((l) => (
                <span key={l} className="block">{l}</span>
              ))}
            </p>
          ))}
        </div>
        <div className="absolute left-[208px] top-[-52px] w-[7px] h-[52px] flex flex-col items-center">
          <div className="w-[9px] h-[9px] rounded-full border-[2px] border-[#3d8de6] bg-white shrink-0" />
          <div className="w-px flex-1 bg-[#a8c8ee]" />
        </div>
        <Handle cls="left-[-4px] top-[-4px]" />
        <Handle cls="left-[208px] top-[-4px]" />
        <Handle cls="right-[-4px] top-[-4px]" />
        <Handle cls="left-[-4px] top-[253px]" />
        <Handle cls="right-[-4px] top-[253px]" />
        <Handle cls="left-[-4px] bottom-[-4px]" />
        <Handle cls="left-[208px] bottom-[-4px]" />
        <Handle cls="right-[-4px] bottom-[-4px]" />
        <svg width="8" height="9" className="absolute left-[-4px] top-[97px]"><path d="M1 1l6 3.500L1 8z" stroke="#e0555c" strokeWidth="1.400" fill="#fff" /></svg>
        <svg width="8" height="9" className="absolute right-[-5px] top-[406px]"><path d="M1 1l6 3.500L1 8z" stroke="#e0555c" strokeWidth="1.400" fill="#fff" /></svg>
      </div>
    </div>
  );
}

function DocArea() {
  return (
    <div className="w-[1199px] shrink-0 flex flex-col bg-[#3d3d3d]">
      <div className="h-[23px] shrink-0 flex items-center justify-between pl-[10px] pr-[10px] bg-[#3f3f3f] border-b border-[#2a2a2a] text-[11.500px]">
        <span className="text-[#ececec]">&lt;Untitled&gt; [Modified] (73.3%)</span>
        <Svg w={8} h={8}>
          <path d="M0.500 0.500l7 7M7.500 0.500l-7 7" stroke="#e0e0e0" strokeWidth="1.200" />
        </Svg>
      </div>
      <div className="flex-1 flex min-h-0">
        <div className="w-[1182px] shrink-0 flex flex-col">
          <HRuler />
          <div className="flex-1 flex min-h-0">
            <VRuler />
            <div className="flex-1 bg-[#212121] relative overflow-hidden">
              <Page />
            </div>
          </div>
        </div>
        <div className="flex-1 relative">
          <div className="mt-[4px] mx-auto w-0 h-0 border-x-[5px] border-x-transparent border-b-[9px] border-b-[#5e5e5e]" />
          <div className="absolute left-[7px] top-[308px] w-[6px] h-[240px] rounded-full bg-[#787878]" />
          <div className="absolute left-[5px] bottom-[5px] w-0 h-0 border-x-[5px] border-x-transparent border-t-[9px] border-t-[#5e5e5e]" />
        </div>
      </div>
      <div className="h-[18px] shrink-0 flex items-center pl-[5px]">
        <div className="w-0 h-0 border-y-[5px] border-y-transparent border-r-[8px] border-r-[#5e5e5e]" />
        <div className="ml-[573px] w-[384px] h-[6px] rounded-full bg-[#787878]" />
        <div className="ml-[202px] w-0 h-0 border-y-[5px] border-y-transparent border-l-[8px] border-l-[#5e5e5e]" />
      </div>
    </div>
  );
}

type Row = { indent?: ReactNode; text?: ReactNode; cls?: string; selected?: boolean };

const styleRows: Row[] = [
  { text: "[No Style]", cls: "text-[12.500px]" },
  { text: "Body", cls: "text-[12.500px]" },
  { text: <span className="block w-[17px] h-[12px] bg-[#d8d8d8]" /> },
  { indent: <span className="w-[6px] text-[12px]">•</span>, text: "Bullet 1", cls: "text-[15.500px] ml-[18px]" },
  { indent: <span className="ml-[24px] w-[4px] h-[4px] bg-[#e6e6e6]" />, text: "Bullet 2", cls: "text-[15.500px] ml-[20px]" },
  { indent: <span className="ml-[48px] w-[4px] h-[4px] rounded-full border border-[#dcdcdc]" />, text: "Bullet 3", cls: "text-[15.500px] ml-[20px]" },
  { text: <>D<sup className="text-[4px] align-[8px]">rop Cap</sup></>, cls: "text-[15.500px]" },
  { selected: true },
  { text: "Heading 2", cls: "text-[12.500px] font-bold" },
  { text: "Initial Words", cls: "text-[16px] font-bold" },
  { text: <span className="border-t border-[#dcdcdc] leading-[14px] inline-block">Line Above</span>, cls: "text-[15px]" },
  { text: <span className="border-b border-[#dcdcdc] leading-[13px] inline-block">Line Below</span>, cls: "text-[12px]" },
  { indent: <span className="ml-[16px] w-px h-[11px] bg-[#d8d8d8]" />, text: "Line To Left", cls: "text-[11.400px] ml-[16px]" },
  { indent: <span className="text-[15.500px]">1.</span>, text: "Numbered 1", cls: "text-[15.500px] ml-[11px]" },
];

function StyleRow({ r, i }: { r: Row; i: number }) {
  return (
    <div className={`h-[30.100px] shrink-0 flex items-center relative pl-[4px] ${r.selected ? "bg-[#5f8ccb]" : i % 2 ? "bg-[#333333]" : "bg-[#383838]"}`}>
      <span className={`w-[12px] text-[15px] ${r.selected ? "text-[#b6cae6]" : "text-[#bdbdbd]"}`}>¶</span>
      {r.indent}
      {r.text && <span className={`text-[#dedede] whitespace-nowrap ${r.cls ?? ""}`}>{r.text}</span>}
      {r.selected && (
        <span className="absolute left-[169px] top-[9px] flex flex-col items-center">
          <span className="w-[6px] h-[3px] bg-[#e6eef8]" />
          <span className="mt-[4px] w-[13px] h-[1px] bg-[#c9d8ec]" />
        </span>
      )}
      <span className="absolute right-[6px] top-[10px]"><MenuIcon /></span>
    </div>
  );
}

function Field({ v, w, caret }: { v: string; w: string; caret?: boolean }) {
  return (
    <div className={`h-[20px] flex items-center pl-[5px] bg-[#333333] border border-[#262626] rounded-[2px] text-[#e6e6e6] text-[12px] ${w}`}>
      <span className="flex-1 whitespace-nowrap overflow-hidden">{v}</span>
      {caret && <span className="mr-[4px]"><Caret /></span>}
    </div>
  );
}

function RightPanel() {
  return (
    <div className="w-[377px] shrink-0 ml-[3px] flex flex-col bg-[#404040]">
      <Tabs items={["Colour", "Swatches", "Stroke"]} active="Colour" />
      <div className="h-[236px] shrink-0 relative flex flex-col">
        <div className="flex mt-[16px] ml-[15px]">
          <Ring size={42} />
          <div className="ml-[6px] mt-[2px]"><Dropper size={18} /></div>
          <div className="ml-[2px] mt-[1px] w-[14px] h-[17px] rounded-full bg-[#ee1c12] border border-[#555555]" />
        </div>
        <div className="flex items-center mt-[9px] ml-[15px]">
          <span className="w-[10px] text-[#d8d8d8]">T</span>
          <div className="w-[296px] h-[9px] rounded-full bg-gradient-to-r from-white to-[#111111] relative">
            <div className="absolute right-[-2px] top-[-3px] w-[13px] h-[13px] rounded-full bg-[#1b1b1b] border-[2px] border-[#e0e0e0]" />
          </div>
          <div className="ml-[7px] w-[38px] h-[19px] flex items-center justify-center bg-[#333333] border border-[#2a2a2a] rounded-[2px] text-[12px] text-[#e6e6e6] whitespace-nowrap">100 %</div>
        </div>
        <div className="mt-[107px] ml-[15px] text-[11px] text-[#dedede] leading-[14px]">Opacity</div>
        <div className="flex items-center mt-[1px] ml-[20px]">
          <div className="w-[12px] h-[12px] rounded-full bg-black border border-[#2c2c2c]" />
          <div className="ml-[9px] w-[255px] h-[9px] rounded-full bg-gradient-to-r from-[#e8e8e8] to-[#3a3a3a] relative">
            <div className="absolute right-[-3px] top-[-3px] w-[13px] h-[13px] rounded-full bg-[#3a3a3a] border-[2px] border-[#d0d0d0]" />
          </div>
          <div className="ml-[7px] w-[59px] h-[20px] flex items-center bg-[#333333] border border-[#2a2a2a] rounded-[2px] text-[12px] text-[#e6e6e6]">
            <span className="w-[43px] text-center">100 %</span>
            <span className="w-[16px] h-full flex items-center justify-center bg-[#3f3f3f]"><Caret /></span>
          </div>
        </div>
      </div>

      <Tabs items={["Layers", "Character", "Paragraph", "Effects", "Text Styles", "Text Frame"]} active="Text Styles" h="h-[24px]" />
      <div className="h-[62px] shrink-0 flex">
        <div className="w-[24px] pt-[9px] pl-[7px]">
          <div className="w-0 h-0 border-t-[7px] border-t-transparent border-r-[7px] border-r-[#5e5e5e]" />
        </div>
        <div className="w-[329px] h-[60px] mt-[2px] bg-[#4a4a4a] pl-[3px] pt-[3px] text-[12px] text-[#f0f0f0]">Heading 1</div>
        <div className="ml-[5px] mt-[4px] w-[15px] h-[15px] rounded-full border border-[#bdbdbd] border-l-transparent flex items-center justify-center">
          <Serif className="text-[10px] font-bold text-[#e6e6e6] leading-none">T</Serif>
        </div>
      </div>
      <div className="h-[411px] shrink-0 flex overflow-hidden font-['Liberation_Sans',sans-serif]">
        <div className="w-[359px] shrink-0 flex flex-col">
          {styleRows.map((r, i) => (
            <StyleRow key={i} r={r} i={i} />
          ))}
        </div>
        <div className="flex-1 relative">
          <div className="absolute left-[5px] top-[9px] w-0 h-0 border-x-[4px] border-x-transparent border-b-[7px] border-b-[#5e5e5e]" />
          <div className="absolute left-[5px] top-[36px] w-[7px] h-[211px] rounded-full bg-[#787878]" />
          <div className="absolute left-[5px] bottom-[5px] w-0 h-0 border-x-[4px] border-x-transparent border-t-[7px] border-t-[#5e5e5e]" />
        </div>
      </div>
      <div className="h-[24px] shrink-0 flex items-center bg-[#404040] pl-[5px] pr-[6px] text-[#c8c8c8]">
        <span className="w-[20px] text-[11px]"><sup className="text-[10px]">+</sup>¶</span>
        <Serif className="ml-[2px] w-[20px] text-[15px]"><sup className="text-[10px]">+</sup>a</Serif>
        <Serif className="w-[20px] italic text-[15px]"><sup className="text-[10px]">+</sup>s</Serif>
        <div className="ml-[42px]"><Circled>¶</Circled></div>
        <div className="ml-[3px]"><Circled><Serif>a</Serif></Circled></div>
        <div className="ml-auto"><Trash color="#b8b8b8" /></div>
      </div>

      <Tabs items={["Transform", "History", "Navigator"]} active="Transform" h="h-[24px]" />
      <div className="flex-1 flex pt-[12px]">
        <div className="ml-[19px] mt-[12px] w-[45px] h-[36px] relative shrink-0">
          <div className="absolute left-[7px] top-[0px] w-[30px] h-[30px] bg-[#6e6e6e]" />
          <div className="absolute left-0 top-0 w-[45px] grid grid-cols-3 auto-rows-[6px] gap-y-[9px] justify-items-center items-center">
            <span className="w-[8px] h-[8px] bg-white" />
            {Array.from({ length: 8 }).map((_, i) => (
              <span key={i} className="w-[5.500px] h-[5.500px] bg-[#c2c2c2]" />
            ))}
          </div>
        </div>
        <div className="ml-[14px] grid grid-cols-[14px_64px_30px_64px] auto-rows-[20px] gap-y-[4px] items-center text-[12px]">
          <span className="text-[#dedede] text-right pr-[1px]">X:</span><div className="ml-[2px]"><Field v="25 mm" w="w-[64px]" /></div>
          <span className="text-[#dedede] text-right">W:</span><div className="ml-[2px]"><Field v="160 mm" w="w-[64px]" /></div>
          <span className="text-[#dedede] text-right pr-[1px]">Y:</span><div className="ml-[2px]"><Field v="75.854 mm" w="w-[64px]" /></div>
          <span className="text-[#dedede] text-right">H:</span><div className="ml-[2px]"><Field v="193.975 mm" w="w-[64px]" /></div>
          <span className="text-[#dedede] text-right pr-[1px] mt-[10px]">R:</span><div className="ml-[2px] mt-[10px]"><Field v="0 °" w="w-[64px]" caret /></div>
          <span className="text-[#dedede] text-right mt-[10px]">S:</span><div className="ml-[2px] mt-[10px]"><Field v="0 °" w="w-[64px]" caret /></div>
        </div>
        <div className="ml-[8px] mt-[15px]">
          <Svg w={6} h={15}>
            <rect x="1" y="0.500" width="4" height="6" rx="2" stroke="#7c7c7c" />
            <rect x="1" y="8.500" width="4" height="6" rx="2" stroke="#7c7c7c" />
          </Svg>
        </div>
      </div>
    </div>
  );
}

function StatusBar() {
  return (
    <div className="h-[27px] shrink-0 flex items-center bg-[#2e2e2e] border-b-[2px] border-[#1a1a1a] relative text-[12px] pt-[1px]">
      <Svg w={10} h={12} className="ml-[7px]"><path d="M0.500 0v12" stroke="#777" /><path d="M10 0v12L2 6z" fill="#777" /></Svg>
      <Svg w={8} h={12} className="ml-[10px]"><path d="M8 0v12L0 6z" fill="#777" /></Svg>
      <span className="ml-[30px] w-[59px] text-[#e0e0e0]">1 of 1</span>
      <Svg w={8} h={12}><path d="M0 0v12l8-6z" fill="#eeeeee" /></Svg>
      <Svg w={10} h={12} className="ml-[9px]"><path d="M0 0v12l8-6z" fill="#777" /><path d="M9.500 0v12" stroke="#777" /></Svg>
      <div className="ml-[9px]"><DocLines color="#dcdcdc" /></div>
      <Svg w={12} h={14} className="ml-[17px]">
        <path d="M2 13V5c0-6 8-6 8 0v8z" fill="#e0352f" />
        <path d="M0 13h12v1H0z" fill="#aaa" />
      </Svg>
      <span className="ml-[13px] text-[#bdbdbd]">
        <b className="text-[#f0f0f0]">Drag</b> to create Frame text. <b className="text-[#f0f0f0]">Click</b> an object to select it.
      </span>
    </div>
  );
}

const dialogRows = [
  "Style", "Character", "Font", "Colour & Decorations", "Position & Transform", "Language", "Optical Alignment", "Typography",
  "Alternates", "Variants", "Figures", "Capitals", "Paragraph", "Spacing", "Tab Stops", "Justification", "Bullets and Numbering",
  "Flow", "Baseline Grid", "Hyphenation", "Drop Caps", "Initial Words", "Decorations",
];
const sectionRows = ["Style", "Character", "Typography", "Paragraph"];

function FormRow({ label, cls, children }: { label: string; cls: string; children: ReactNode }) {
  return (
    <div className={`flex items-center shrink-0 ${cls}`}>
      <span className="w-[124px] text-right whitespace-nowrap text-[#e2e2e2] tracking-[-0.3px]">{label}</span>
      <div className="ml-[4px] flex items-center h-full">{children}</div>
    </div>
  );
}

function DField({ label, w, off, caret }: { label?: string; w: string; off?: boolean; caret?: boolean }) {
  return (
    <div className={`h-full flex items-center pl-[5px] border border-[#2a2a2a] rounded-[2px] text-[11.800px] ${off ? "bg-[#3a3a3a] text-[#858585]" : "bg-[#343434] text-[#e6e6e6]"} ${w}`}>
      <span className="flex-1 whitespace-nowrap">{label}</span>
      {caret && <span className="mr-[3px]"><Caret color={off ? "#7a7a7a" : "#e0e0e0"} /></span>}
    </div>
  );
}

function Dialog() {
  return (
    <div className="absolute left-[873px] top-[218px] w-[627px] h-[737px] bg-[#414141] border-l border-[#1c1c1c] shadow-[0_0_6px_#00000066] flex flex-col">
      <div className="h-[29px] shrink-0 flex items-center justify-center bg-[#3b3b3b] relative text-[#e8e8e8] text-[11.800px] pt-[2px] pr-[15px]">
        Edit Text Style
        <div className="absolute right-[12px] top-[11px]">
          <Svg w={9} h={9}>
            <path d="M0.500 0.500l8 8M8.500 0.500l-8 8" stroke="#e6e6e6" strokeWidth="1.200" />
          </Svg>
        </div>
      </div>
      <div className="flex pl-[20px] pt-[21px]">
        <div className="w-[140px] h-[635px] shrink-0 border border-[#6e6e6e] bg-[#3c3c3c] flex flex-col tracking-[-0.2px]">
          {dialogRows.map((t, i) => (
            <div
              key={t}
              className={`h-[26px] shrink-0 flex items-center whitespace-nowrap ${sectionRows.includes(t) ? "pl-[5px]" : "pl-[17px]"} ${
                t === "Bullets and Numbering" ? "bg-[#5f8ccb] text-[#f2f2f2]" : i % 2 ? "bg-[#3a3a3a] text-[#e2e2e2]" : "bg-[#333333] text-[#e2e2e2]"
              }`}
            >
              {t}
            </div>
          ))}
        </div>
        <div className="ml-[15px] w-[434px] h-[635px] flex flex-col">
          <FormRow label="Style name:" cls="mt-[6px] h-[24px]">
            <div className="ml-px w-[285px] h-full flex items-center pl-[2px] bg-[#323232] border border-[#5a8fd0] rounded-[2px] text-[#eeeeee] text-[11.500px]">Heading 1</div>
          </FormRow>
          <div className="mt-[26px] h-[20px] flex items-center text-[#e6e6e6] shrink-0 tracking-[-0.1px]">Bullets and Numbering</div>
          <FormRow label="Type:" cls="mt-[18px] h-[18px]"><DField label="Bullet" w="w-[179px]" caret /></FormRow>
          <FormRow label="Level:" cls="mt-[4px] h-[20px]">
            <DField label="[No change]" w="w-[79px]" off />
            <Spin className="ml-[3px] !h-[20px]" />
          </FormRow>
          <FormRow label="Text:" cls="mt-[4px] h-[24px]">
            <div className="w-[179px] h-full flex items-center bg-[#343434] border border-[#2a2a2a] rounded-[2px]">
              <span className="ml-[6px]"><Caret color="#f0f0f0" /></span>
              <Svg w={12} h={8} className="ml-[6px]">
                <path d="M1 3c2-3 4 0 5 2s3 1 5 0c-1-3-4-3-6-1" stroke="#e6e6e6" strokeWidth="1.600" />
              </Svg>
              {[0, 1].map((k) => (
                <span key={k} className={`w-[30px] h-[19px] bg-[#4e6a9c] rounded-[1px] flex items-end justify-center text-[8px] text-[#e6e6e6] leading-[12px] ${k ? "ml-[6px]" : "ml-[4px]"}`}>↲</span>
              ))}
            </div>
            <div className="ml-[5px] w-[89px] h-[20px] flex items-center justify-center bg-[#3a3a3a] border border-[#2e2e2e] rounded-[2px] text-[#eeeeee] text-[12.500px]">More...</div>
          </FormRow>
          <FormRow label="Style:" cls="mt-[5px] h-[18px]"><DField label="Chapter Ornament" w="w-[179px]" caret /></FormRow>
          <FormRow label="Tabstop:" cls="mt-[4px] h-[20px]">
            <DField label="[No change]" w="w-[79px]" />
            <Spin className="ml-[5px] !h-[20px]" />
          </FormRow>
          <FormRow label="Alignment:" cls="mt-[5px] h-[18px]"><DField label="[No change]" w="w-[160px]" caret /></FormRow>
          <FormRow label="Name:" cls="mt-[5px] h-[20px]">
            <DField w="w-[179px]" off />
            <span className="ml-[6px] w-[9px] h-[9px] bg-[#8a8a8a] border border-[#555555]" />
            <span className="ml-[6px] text-[#8e8e8e]">Global</span>
          </FormRow>
          <FormRow label="Start numbering at:" cls="mt-[6px] h-[19px]">
            <DField label="[No change]" w="w-[79px]" off />
            <Spin className="ml-[5px] !h-[19px]" />
          </FormRow>
          <FormRow label="Restart numbering:" cls="mt-[5px] h-[18px]"><DField label="[No change]" w="w-[160px]" off caret /></FormRow>
          <div className="mt-[6px] ml-[129px] h-[12px] flex items-center text-[#8e8e8e] shrink-0 tracking-[-0.2px]">
            <span className="w-[9px] h-[9px] bg-[#8a8a8a] border border-[#555555]" />
            <span className="ml-[6px]">Restart numbering now</span>
          </div>
          <div className="mt-auto h-[14px] leading-[14px] text-[#e2e2e2]">Style settings:</div>
          <div className="mt-[2px] h-[82px] w-[435px] shrink-0 border border-[#6e6e6e] pl-px pt-[1px] text-[12px] leading-[16px] text-[#e6e6e6]">
            <span className="block whitespace-nowrap">Base + Next: Body; Next level: Heading 2; Font weight: Bold; Font size: 20 pt;</span>
            <span className="block whitespace-nowrap">Align paragraph: Centre; Space after: 48 pt; List: Bullet; List bullet string:</span>
            <span className="block whitespace-nowrap">"▯&lt;LSEP&gt;&lt;LSEP&gt;"; Bullet Font: Wingdings; List character style: "Chapter</span>
            <span className="block whitespace-nowrap">Ornament"</span>
          </div>
        </div>
      </div>
      <div className="flex items-center pt-[9px] text-[12.500px]">
        <span className="ml-[16px] w-[11px] h-[11px] rounded-[2px] bg-[#5c5c5c] border border-[#333333]" />
        <span className="ml-[5px] text-[#e6e6e6] text-[11.500px] tracking-[-0.2px]">Apply style to selection</span>
        <div className="ml-auto w-[78px] h-[20px] flex items-center justify-center bg-[#3a3a3a] border border-[#2c2c2c] rounded-[2px] text-[#eeeeee]">OK</div>
        <div className="ml-[5px] mr-[25px] w-[74px] h-[20px] flex items-center justify-center bg-[#3a3a3a] border border-[#2c2c2c] rounded-[2px] text-[#eeeeee]">Cancel</div>
      </div>
    </div>
  );
}

function Scribbles() {
  const s = { stroke: "#e01a1a", strokeWidth: 5.5, fill: "none", strokeLinecap: "round" as const, strokeLinejoin: "round" as const, vectorEffect: "non-scaling-stroke" as const };
  return (
    <svg width="620" height="400" viewBox="0 0 1568 1200" preserveAspectRatio="none" className="absolute left-[870px] top-[210px] pointer-events-none">
      <path {...s} d="M660 285C690 292 720 310 735 330C760 360 778 400 775 425C768 445 730 442 690 438C620 432 530 420 470 405C430 390 415 350 425 325C445 305 540 308 685 305" />
      <path {...s} d="M468 585C530 605 590 610 655 625M605 550C625 580 645 605 662 628C640 640 600 658 570 658" />
      <path {...s} d="M492 762C550 750 610 720 668 708M603 680C625 690 650 700 670 712C660 730 645 750 630 765" />
    </svg>
  );
}

export default function App() {
  return (
    <div className="relative w-[1920px] h-[1042px] overflow-hidden flex flex-col bg-[#2a2a2a] text-[11.500px] leading-[1.300] font-['Roboto',sans-serif] text-[#e6e6e6]">
      <TitleBar />
      <MainToolbar />
      <ContextBar />
      <div className="flex-1 min-h-0 flex">
        <ToolsColumn />
        <PagesPanel />
        <DocArea />
        <RightPanel />
      </div>
      <StatusBar />
      <Dialog />
      <Scribbles />
    </div>
  );
}
